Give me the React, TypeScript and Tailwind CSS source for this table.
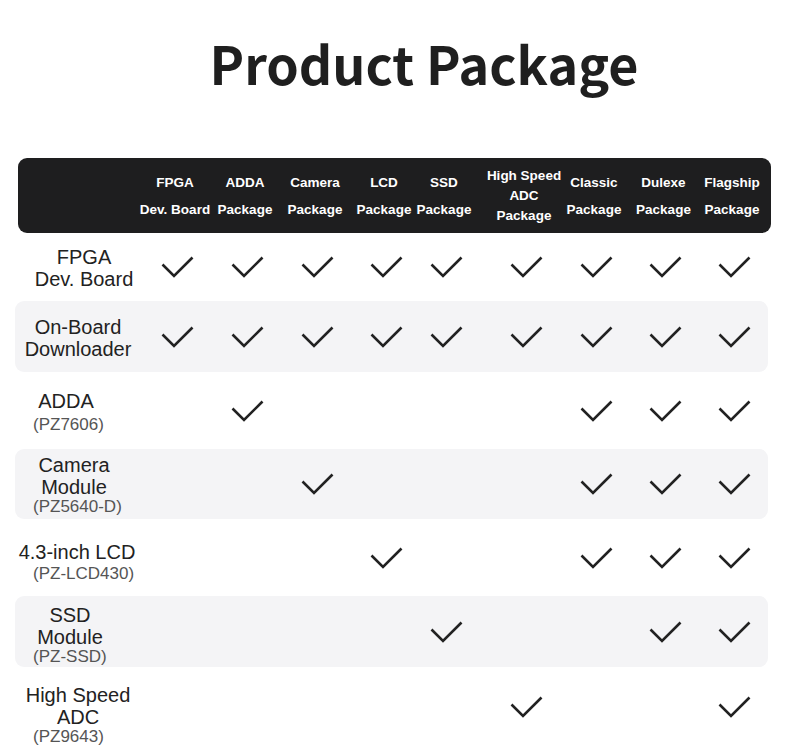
import React from "react";

const COLS = [
  { lines: ["FPGA", "Dev. Board"], adj: "" },
  { lines: ["ADDA", "Package"], adj: "" },
  { lines: ["Camera", "Package"], adj: "" },
  { lines: ["LCD", "Package"], adj: "pl-[4px]" },
  { lines: ["SSD", "Package"], adj: "pr-[10px]" },
  { lines: ["High Speed", "ADC", "Package"], adj: "pl-[5px]" },
  { lines: ["Classic", "Package"], adj: "" },
  { lines: ["Dulexe", "Package"], adj: "" },
  { lines: ["Flagship", "Package"], adj: "" },
];

interface Row {
  lines: string[];
  sub?: string;
  h: string;
  pt: string;
  shift: string;
  subGap?: string;
  gray: boolean;
  checks: number[];
}

const ROWS: Row[] = [
  { lines: ["FPGA", "Dev. Board"], h: "h-[68px]", pt: "pt-[13px]", shift: "ml-[6px]", gray: false, checks: [1, 2, 3, 4, 5, 6, 7, 8, 9] },
  { lines: ["On-Board", "Downloader"], h: "h-[71px]", pt: "pt-[15px]", shift: "ml-0", gray: true, checks: [1, 2, 3, 4, 5, 6, 7, 8, 9] },
  { lines: ["ADDA"], sub: "(PZ7606)", subGap: "mt-[4px]", h: "h-[77px]", pt: "pt-[18px]", shift: "ml-[-12px]", gray: false, checks: [2, 7, 8, 9] },
  { lines: ["Camera", "Module"], sub: "(PZ5640-D)", subGap: "mt-0", h: "h-[70px]", pt: "pt-[5px]", shift: "ml-[-4px]", gray: true, checks: [3, 7, 8, 9] },
  { lines: ["4.3-inch LCD"], sub: "(PZ-LCD430)", subGap: "mt-[2px]", h: "h-[77px]", pt: "pt-[22px]", shift: "ml-[-1px]", gray: false, checks: [4, 7, 8, 9] },
  { lines: ["SSD", "Module"], sub: "(PZ-SSD)", subGap: "mt-0", h: "h-[71px]", pt: "pt-[8px]", shift: "ml-[-8px]", gray: true, checks: [5, 8, 9] },
  { lines: ["High Speed", "ADC"], sub: "(PZ9643)", subGap: "mt-0", h: "h-[74px]", pt: "pt-[17px]", shift: "ml-0", gray: false, checks: [6, 9] },
];

function Check() {
  return (
    <svg width="33" height="22" viewBox="0 0 33 22" fill="none">
      <polyline points="1.5,8.5 13,20 31.5,1.5" stroke="#222" strokeWidth="2.6" strokeLinejoin="miter" />
    </svg>
  );
}

export default function App() {
  return (
    <div className="w-[790px] h-[750px] overflow-hidden bg-white text-[#222] font-['Liberation_Sans',Arial,sans-serif]">
      {/* Title */}
      <div className="pt-[37px] pl-[58px] text-center">
        <h1 className="text-[52px] leading-none font-bold text-[#1f1f1f] font-['Noto_Sans_CJK_SC','Noto_Sans',sans-serif]">
          Product Package
        </h1>
      </div>

      {/* Header */}
      <div className="mt-[69px] ml-[18px] w-[753px] h-[75px] rounded-[9px] bg-[#1e1e1f] grid grid-cols-[122px_70px_70px_70px_64px_70px_75px_70px_69px_68px] items-center text-white text-[13.5px] font-bold">
        <div />
        {COLS.map(c => (
          <div
            key={c.lines.join(" ")}
            className={`flex flex-col items-center whitespace-nowrap ${c.lines.length > 2 ? "leading-[20px]" : "leading-[27px]"} ${c.adj}`}
          >
            {c.lines.map(l => (
              <span key={l}>{l}</span>
            ))}
          </div>
        ))}
      </div>

      {/* Rows */}
      <div className="ml-[15px] w-[753px]">
        {ROWS.map(r => (
          <div
            key={r.lines.join(" ")}
            className={`grid grid-cols-[127px_70px_70px_70px_64px_70px_75px_70px_69px_68px] ${r.h} ${r.gray ? "bg-[#f4f4f6] rounded-[9px]" : ""}`}
          >
            <div className={`self-start flex flex-col ${r.pt}`}>
              <div className={`w-[126px] text-center whitespace-nowrap text-[20px] leading-[22px] ${r.shift}`}>
                {r.lines.map(l => (
                  <div key={l}>{l}</div>
                ))}
              </div>
              {r.sub && (
                <div className={`pl-[18px] text-[17px] leading-[18px] text-[#555] whitespace-nowrap ${r.subGap}`}>
                  {r.sub}
                </div>
              )}
            </div>
            {COLS.map((c, i) => (
              <div key={i} className={`flex items-center justify-center ${c.adj}`}>
                {r.checks.includes(i + 1) && <Check />}
              </div>
            ))}
          </div>
        ))}
      </div>
    </div>
  );
}
